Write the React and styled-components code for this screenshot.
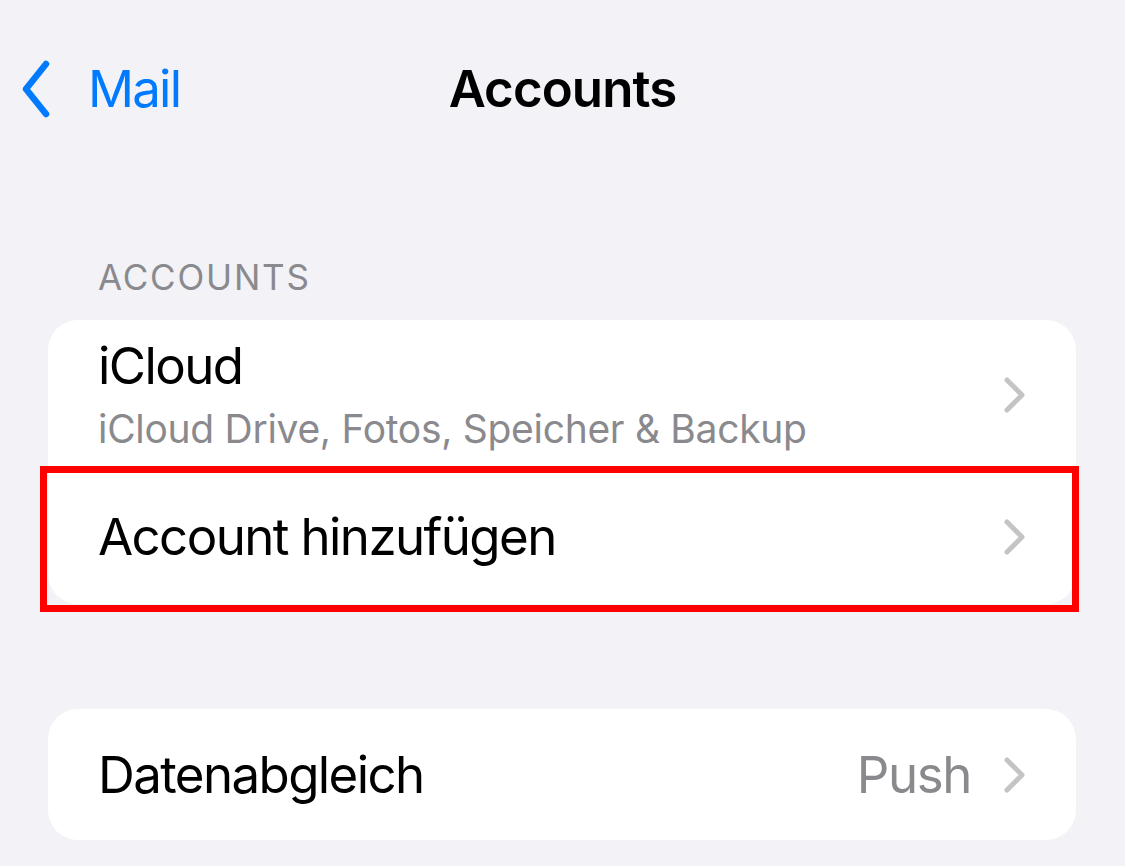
import styled, { createGlobalStyle } from "styled-components";

const GlobalStyle = createGlobalStyle`
  html, body {
    margin: 0;
    padding: 0;
    background: #f2f2f7;
  }
  body {
    font-family: Inter, "Noto Sans", "Liberation Sans", sans-serif;
    -webkit-font-smoothing: antialiased;
  }
`;

const Screen = styled.div`
  width: 1125px;
  height: 866px;
  background: #f2f2f7;
  overflow: hidden;
`;

const NavBar = styled.div`
  position: relative;
  height: 176px;
  display: flex;
  align-items: center;
  justify-content: center;
`;

const BackButton = styled.div`
  position: absolute;
  left: 22px;
  top: 58px;
  display: flex;
  align-items: center;
  gap: 38px;
  color: #007aff;
  font-size: 51px;
  letter-spacing: -1.8px;
`;

const NavTitle = styled.div`
  font-size: 51px;
  font-weight: 600;
  color: #000;
  letter-spacing: -0.9px;
`;

const SectionHeader = styled.div`
  padding: 80px 0 0 98px;
  height: 64px;
  font-size: 35px;
  color: #8a8a8e;
  letter-spacing: 1.8px;
`;

const Card = styled.div`
  margin: 0 49px 0 48px;
  background: #fff;
  border-radius: 30px;
  margin-top: ${(p) => p.$top || 0}px;
`;

const Row = styled.div`
  position: relative;
  height: ${(p) => p.$height}px;
  display: flex;
  align-items: center;
  padding: 0 49px 0 50px;
`;

const RowText = styled.div`
  flex: 1;
  display: flex;
  flex-direction: column;
`;

const Title = styled.div`
  font-size: 51px;
  color: #000;
  letter-spacing: -1.6px;
  line-height: 60px;
`;

const Subtitle = styled.div`
  font-size: 39px;
  color: #8a8a8e;
  letter-spacing: -0.3px;
  line-height: 50px;
  margin-top: 8px;
`;

const Value = styled.div`
  font-size: 51px;
  color: #8a8a8e;
  letter-spacing: -1.4px;
  margin-right: 32px;
`;

const Highlight = styled.div`
  position: absolute;
  top: -4px;
  left: -8px;
  right: -3px;
  bottom: -8px;
  border: 7px solid #ff0000;
  pointer-events: none;
`;

const Chevron = () => (
  <svg width="24" height="38" viewBox="0 0 24 38">
    <path
      d="M4 4 L19 19 L4 34"
      fill="none"
      stroke="#c4c4c7"
      strokeWidth="5"
      strokeLinecap="round"
      strokeLinejoin="round"
    />
  </svg>
);

const BackChevron = () => (
  <svg width="28" height="58" viewBox="0 0 28 58">
    <path
      d="M24 4 L4 29 L24 54"
      fill="none"
      stroke="#007aff"
      strokeWidth="6.5"
      strokeLinecap="round"
      strokeLinejoin="round"
    />
  </svg>
);

export default function App() {
  return (
    <Screen>
      <GlobalStyle />
      <NavBar>
        <BackButton>
          <BackChevron />
          <span>Mail</span>
        </BackButton>
        <NavTitle>Accounts</NavTitle>
      </NavBar>
      <SectionHeader>ACCOUNTS</SectionHeader>
      <Card>
        <Row $height={150}>
          <RowText>
            <Title>iCloud</Title>
            <Subtitle>iCloud Drive, Fotos, Speicher &amp; Backup</Subtitle>
          </RowText>
          <Chevron />
        </Row>
        <Row $height={134}>
          <RowText>
            <Title>Account hinzufügen</Title>
          </RowText>
          <Chevron />
          <Highlight />
        </Row>
      </Card>
      <Card $top={105}>
        <Row $height={131}>
          <RowText>
            <Title>Datenabgleich</Title>
          </RowText>
          <Value>Push</Value>
          <Chevron />
        </Row>
      </Card>
    </Screen>
  );
}
